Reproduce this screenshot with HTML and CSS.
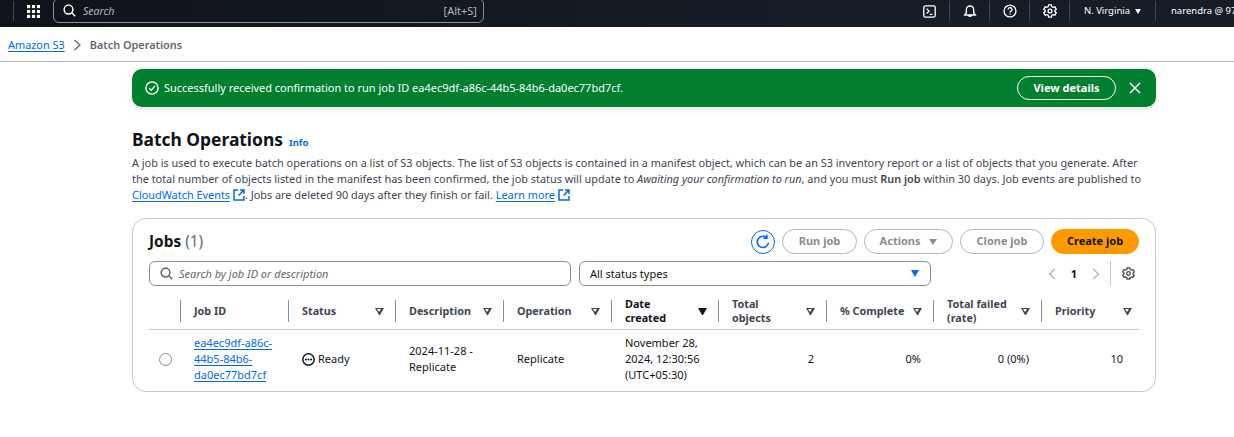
FILE: index.html
```html
<!DOCTYPE html>
<html>
	<head>
		<meta charset="UTF-8">
		<title>Batch Operations</title>
		<link rel="stylesheet" href="styles.css">
	</head>
	<body>
		<header class="topnav">
			<span class="nav-sep nav-sep-first"></span>
			<svg class="apps" width="13" height="13" viewBox="0 0 14 14" fill="#fff"><rect x="0" y="0" width="3.4" height="3.4"/><rect x="5.3" y="0" width="3.4" height="3.4"/><rect x="10.6" y="0" width="3.4" height="3.4"/><rect x="0" y="5.3" width="3.4" height="3.4"/><rect x="5.3" y="5.3" width="3.4" height="3.4"/><rect x="10.6" y="5.3" width="3.4" height="3.4"/><rect x="0" y="10.6" width="3.4" height="3.4"/><rect x="5.3" y="10.6" width="3.4" height="3.4"/><rect x="10.6" y="10.6" width="3.4" height="3.4"/></svg>
			<div class="nav-search">
				<svg width="13" height="13" viewBox="0 0 16 16" fill="none" stroke="#fff" stroke-width="1.8"><circle cx="6.8" cy="6.8" r="5.4"/><path d="M10.8 10.8 15 15"/></svg>
				<span class="nav-search-text">Search</span>
				<span class="nav-shortcut">[Alt+S]</span>
			</div>
			<div class="nav-right">
				<span class="nav-item"><svg width="13" height="13" viewBox="0 0 16 16" fill="none" stroke="#fff" stroke-width="1.6"><rect x="1" y="1" width="14" height="14" rx="2"/><path d="M4.5 4.5 7.5 7.5 4.5 10.5M8.5 11.5H11.5"/></svg></span>
				<span class="nav-item"><svg width="14" height="14" viewBox="0 0 16 16" fill="none" stroke="#fff" stroke-width="1.6"><path d="M2 12.5h12l-1.8-2.5V6.5a4.2 4.2 0 0 0-8.4 0V10ZM6.3 12.8a1.8 1.8 0 0 0 3.4 0"/></svg></span>
				<span class="nav-item"><svg width="14" height="14" viewBox="0 0 16 16" fill="none" stroke="#fff" stroke-width="1.5"><circle cx="8" cy="8" r="6.8"/><path d="M5.9 6.2a2.2 2.2 0 1 1 3.3 1.9C8.4 8.6 8 9 8 9.9M8 11v1.4"/></svg></span>
				<span class="nav-item"><svg width="14" height="14" viewBox="0 0 16 16" fill="none" stroke="#fff" stroke-width="1.5"><path d="M6.4 1h3.2l.4 2 1.6.9 2-.6 1.5 2.7-1.5 1.3v1.4l1.5 1.3-1.5 2.7-2-.6-1.6.9-.4 2H6.4l-.4-2-1.6-.9-2 .6L.9 10l1.5-1.3V7.3L.9 6l1.5-2.7 2 .6L6 3Z"/><circle cx="8" cy="8" r="2.2"/></svg></span>
				<span class="nav-item nav-region">N. Virginia <i class="nav-caret"></i></span>
				<span class="nav-item nav-user">narendra @ 9704</span>
			</div>
		</header>

		<nav class="crumbs">
			<a class="link crumb-link">Amazon S3</a>
			<svg width="9" height="12" viewBox="0 0 9 12" fill="none" stroke="#656871" stroke-width="1.3"><path d="M1.5 1 7 6 1.5 11"/></svg>
			<span class="crumb-current">Batch Operations</span>
		</nav>

		<main class="content">
			<div class="flash">
				<svg width="14" height="14" viewBox="0 0 16 16" fill="none" stroke="#fff" stroke-width="1.6"><circle cx="8" cy="8" r="7"/><path d="M4.8 8.2 7.2 10.5 11.4 5.6"/></svg>
				<span class="flash-text">Successfully received confirmation to run job ID ea4ec9df-a86c-44b5-84b6-da0ec77bd7cf.</span>
				<button class="flash-btn">View details</button>
				<svg class="flash-close" width="12" height="12" viewBox="0 0 12 12" fill="none" stroke="#fff" stroke-width="1.5"><path d="M1 1 11 11M11 1 1 11"/></svg>
			</div>

			<div class="page-title">
				<h1>Batch Operations</h1>
				<a class="info">Info</a>
			</div>
			<p class="intro">A job is used to execute batch operations on a list of S3 objects. The list of S3 objects is contained in a manifest object, which can be an S3 inventory report or a list of objects that you generate. After the total number of objects listed in the manifest has been confirmed, the job status will update to <em>Awaiting your confirmation to run</em>, and you must <strong>Run job</strong> within 30 days. Job events are published to <a class="link">CloudWatch Events</a> <svg class="ext" width="12" height="12" viewBox="0 0 12 12" fill="none" stroke="#006ce0" stroke-width="1.5"><path d="M5 1H1V11H11V7M7 1H11V5M11 1 5.5 6.5"/></svg>. Jobs are deleted 90 days after they finish or fail. <a class="link">Learn more</a> <svg class="ext" width="12" height="12" viewBox="0 0 12 12" fill="none" stroke="#006ce0" stroke-width="1.5"><path d="M5 1H1V11H11V7M7 1H11V5M11 1 5.5 6.5"/></svg></p>

			<section class="card">
				<div class="card-head">
					<h2>Jobs <span class="count">(1)</span></h2>
					<div class="actions">
						<button class="refresh"><svg width="16" height="16" viewBox="0 0 16 16" fill="none" stroke="#006ce0" stroke-width="1.7"><path d="M13.5 8.5A5.6 5.6 0 1 1 11 3.2"/><path d="M11.8 0.8V4.2H8.4"/></svg></button>
						<button class="btn btn-run">Run job</button>
						<button class="btn btn-actions">Actions <i class="caret-grey"></i></button>
						<button class="btn btn-clone">Clone job</button>
						<button class="btn btn-create">Create job</button>
					</div>
				</div>
				<div class="filters">
					<div class="search">
						<svg width="13" height="13" viewBox="0 0 16 16" fill="none" stroke="#656871" stroke-width="1.9"><circle cx="6.8" cy="6.8" r="5.4"/><path d="M10.8 10.8 15 15"/></svg>
						<span>Search by job ID or description</span>
					</div>
					<div class="select">
						<span>All status types</span>
						<i class="caret-blue"></i>
					</div>
					<div class="pager">
						<svg width="8" height="12" viewBox="0 0 8 12" fill="none" stroke="#b4b4bb" stroke-width="1.4"><path d="M7 1 1.5 6 7 11"/></svg>
						<span class="page-no">1</span>
						<svg width="8" height="12" viewBox="0 0 8 12" fill="none" stroke="#b4b4bb" stroke-width="1.4"><path d="M1 1 6.5 6 1 11"/></svg>
						<span class="pager-sep"></span>
						<svg width="13" height="13" viewBox="0 0 16 16" fill="none" stroke="#424650" stroke-width="1.6"><path d="M6.4 1h3.2l.4 2 1.6.9 2-.6 1.5 2.7-1.5 1.3v1.4l1.5 1.3-1.5 2.7-2-.6-1.6.9-.4 2H6.4l-.4-2-1.6-.9-2 .6L.9 10l1.5-1.3V7.3L.9 6l1.5-2.7 2 .6L6 3Z"/><circle cx="8" cy="8" r="2.2"/></svg>
					</div>
				</div>
				<table class="jobs">
					<colgroup>
						<col class="c-sel"><col class="c-108"><col class="c-107"><col class="c-108"><col class="c-108"><col class="c-107"><col class="c-108"><col class="c-107"><col class="c-108"><col>
					</colgroup>
					<thead>
						<tr>
							<th></th>
							<th><div class="th-in"><span>Job ID</span></div></th>
							<th><div class="th-in"><span>Status</span><i class="sort"></i></div></th>
							<th><div class="th-in"><span>Description</span><i class="sort"></i></div></th>
							<th><div class="th-in"><span>Operation</span><i class="sort"></i></div></th>
							<th class="th-active"><div class="th-in"><span>Date<br>created</span><i class="sort sort-on"></i></div></th>
							<th><div class="th-in"><span>Total<br>objects</span><i class="sort"></i></div></th>
							<th><div class="th-in"><span>% Complete</span><i class="sort"></i></div></th>
							<th><div class="th-in"><span>Total failed<br>(rate)</span><i class="sort"></i></div></th>
							<th><div class="th-in th-last"><span>Priority</span><i class="sort"></i></div></th>
						</tr>
					</thead>
					<tbody>
						<tr>
							<td class="td-sel"><span class="radio"></span></td>
							<td><a class="link">ea4ec9df-a86c-<br>44b5-84b6-<br>da0ec77bd7cf</a></td>
							<td><span class="status"><svg width="13" height="13" viewBox="0 0 16 16"><circle cx="8" cy="8" r="7" fill="none" stroke="#0f141a" stroke-width="1.8"/><circle cx="4.8" cy="8" r="1.2"/><circle cx="8" cy="8" r="1.2"/><circle cx="11.2" cy="8" r="1.2"/></svg>Ready</span></td>
							<td>2024-11-28 -<br>Replicate</td>
							<td>Replicate</td>
							<td>November 28,<br>2024, 12:30:56<br>(UTC+05:30)</td>
							<td class="num">2</td>
							<td class="num">0%</td>
							<td class="num">0 (0%)</td>
							<td class="num num-last">10</td>
						</tr>
					</tbody>
				</table>
			</section>
		</main>
	</body>
</html>
```

FILE: styles.css
```css
*{
	margin: 0;
	padding: 0;
	box-sizing: border-box;
}
html, body{
	height: 437px;
	overflow: hidden;
}
body{
	background-color: #fff;
	color: #0f141a;
	font-family: "Noto Sans", "Liberation Sans", sans-serif;
	font-size: 11px;
	line-height: 16px;
}
button{
	font-family: inherit;
}
.link{
	color: #006ce0;
	text-decoration: underline;
	text-underline-offset: 2px;
}

/* top bar */
.topnav{
	height: 27px;
	background: linear-gradient(90deg, #0f141a, #161d26 70%);
	display: flex;
	align-items: center;
	padding: 0 0 5px 13px;
	color: #fff;
	white-space: nowrap;
	overflow: hidden;
}
.nav-sep{
	width: 1px;
	height: 20px;
	background-color: #424650;
}
.apps{
	margin-left: 13px;
	flex: none;
}
.nav-search{
	margin-left: 13px;
	margin-top: -1px;
	width: 431px;
	height: 25px;
	padding: 0 6px 0 9px;
	border: 1px solid #8c8c94;
	border-radius: 6px;
	display: flex;
	align-items: center;
	gap: 7px;
	font-size: 10.5px;
	color: #b4b4bb;
	flex: none;
}
.nav-search-text{
	font-style: italic;
	flex: 1;
}
.nav-shortcut{
	font-size: 11px;
}
.nav-right{
	margin-left: auto;
	display: flex;
	align-items: center;
	height: 20px;
	width: 324px;
	flex: none;
}
.nav-item{
	height: 20px;
	width: 40px;
	flex: none;
	display: flex;
	align-items: center;
	justify-content: center;
	border-right: 1px solid #424650;
	font-size: 9.5px;
	color: #fff;
}
.nav-region{
	width: 86px;
	gap: 5px;
}
.nav-user{
	width: auto;
	border: none;
	padding-left: 15px;
}
.nav-caret{
	border-left: 3.5px solid transparent;
	border-right: 3.5px solid transparent;
	border-top: 5px solid #fff;
}

/* breadcrumbs */
.crumbs{
	height: 35px;
	border-bottom: 1px solid #b4b4bb;
	display: flex;
	align-items: center;
	gap: 8px;
	padding: 1px 0 0 8px;
	font-size: 10.9px;
}
.crumb-current{
	color: #656871;
	font-weight: 600;
}

/* page */
.content{
	margin: 7px 78px 0 132px;
}
.flash{
	height: 38px;
	background-color: #00802f;
	border-radius: 10px;
	box-shadow: 0 2px 6px rgba(0,0,0,0.12);
	display: flex;
	align-items: center;
	padding: 0 15px 0 13px;
	color: #fff;
	font-size: 10.97px;
}
.flash-text{
	margin-left: 5px;
	flex: 1;
}
.flash-btn{
	width: 99px;
	height: 24px;
	padding-bottom: 2px;
	background: transparent;
	border: 1px solid #fff;
	border-radius: 12px;
	color: #fff;
	font-size: 11px;
	font-weight: 700;
}
.flash-close{
	margin-left: 13px;
}
.page-title{
	margin-top: 20px;
	display: flex;
	align-items: baseline;
	gap: 6px;
}
h1{
	font-size: 17.4px;
	line-height: 24px;
	font-weight: 700;
}
.info{
	color: #006ce0;
	font-size: 9.5px;
	font-weight: 700;
}
.intro{
	margin-top: 4px;
	color: #424650;
	font-size: 10.9px;
}
.intro strong{
	font-weight: 600;
}
.ext{
	vertical-align: -2px;
}
.card{
	margin-top: 15px;
	height: 174px;
	border: 1px solid #c6c6cd;
	border-radius: 14px;
	padding: 0 16px;
}
.card-head{
	display: flex;
	align-items: center;
	justify-content: space-between;
	padding-top: 10px;
}
h2{
	font-size: 15.4px;
	line-height: 25px;
	font-weight: 700;
}
.count{
	font-weight: 400;
	color: #656871;
}
.actions{
	display: flex;
	align-items: center;
	gap: 7px;
}
.refresh{
	width: 24px;
	height: 24px;
	background: #fff;
	border: 1px solid #006ce0;
	border-radius: 50%;
	display: flex;
	align-items: center;
	justify-content: center;
}
.btn{
	height: 25px;
	padding-bottom: 2px;
	background: #fff;
	border: 1px solid #b4b4bb;
	border-radius: 13px;
	color: #8c8c94;
	font-size: 11px;
	font-weight: 700;
}
.btn-run{
	width: 75px;
}
.btn-actions{
	width: 89px;
}
.btn-clone{
	width: 84px;
}
.btn-create{
	width: 88px;
	background-color: #ff9900;
	border-color: #ff9900;
	color: #0f141a;
}
.caret-grey{
	display: inline-block;
	margin-left: 6px;
	border-left: 4px solid transparent;
	border-right: 4px solid transparent;
	border-top: 6px solid #8c8c94;
}
.filters{
	margin-top: 7px;
	display: flex;
	align-items: center;
	height: 25px;
}
.search, .select{
	height: 25px;
	border: 1px solid #8c8c94;
	border-radius: 6px;
	display: flex;
	align-items: center;
}
.search{
	width: 422px;
	padding-left: 10px;
	gap: 6px;
	font-style: italic;
	color: #656871;
}
.select{
	width: 352px;
	margin-left: 8px;
	padding: 0 11px 0 10px;
	justify-content: space-between;
}
.caret-blue{
	border-left: 4.5px solid transparent;
	border-right: 4.5px solid transparent;
	border-top: 7px solid #006ce0;
}
.pager{
	margin-left: auto;
	padding-right: 4px;
	display: flex;
	align-items: center;
	height: 25px;
}
.page-no{
	margin: 0 15px;
	font-weight: 700;
}
.pager-sep{
	width: 1px;
	height: 25px;
	background-color: #c6c6cd;
	margin: 0 11px 0 10px;
}

/* table */
.jobs{
	margin-top: 7px;
	width: 990px;
	border-collapse: collapse;
	table-layout: fixed;
}
.c-sel{
	width: 31px;
}
.c-108{
	width: 108px;
}
.c-107{
	width: 107px;
}
.jobs th{
	height: 36px;
	border-bottom: 1px solid #c6c6cd;
	text-align: left;
	font-size: 10.8px;
	font-weight: 700;
	color: #424650;
	padding-top: 1px;
}
.jobs th.th-active{
	color: #0f141a;
}
.th-in{
	height: 22px;
	display: flex;
	align-items: center;
	justify-content: space-between;
	padding: 0 11px 0 13px;
	border-left: 1px solid #8c8c94;
	line-height: 14px;
}
.th-last{
	padding-right: 7px;
}
.sort{
	width: 9px;
	height: 7px;
	flex: none;
	position: relative;
	border-left: 4.5px solid transparent;
	border-right: 4.5px solid transparent;
	border-top: 7px solid #424650;
}
.sort:after{
	content: "";
	position: absolute;
	left: -2px;
	top: -6px;
	border-left: 2px solid transparent;
	border-right: 2px solid transparent;
	border-top: 3px solid #fff;
}
.sort-on{
	border-top-color: #0f141a;
}
.sort-on:after{
	display: none;
}
.jobs td{
	height: 60px;
	padding: 0 13px 0 14px;
	vertical-align: middle;
}
.jobs td.td-sel{
	padding: 0 0 0 10px;
}
.jobs td.num{
	text-align: right;
	padding-right: 12px;
}
.jobs td.num-last{
	padding-right: 16px;
}
.radio{
	display: block;
	width: 13px;
	height: 13px;
	border: 1px solid #8c8c94;
	border-radius: 50%;
}
.status{
	display: flex;
	align-items: center;
	gap: 3px;
}
```
